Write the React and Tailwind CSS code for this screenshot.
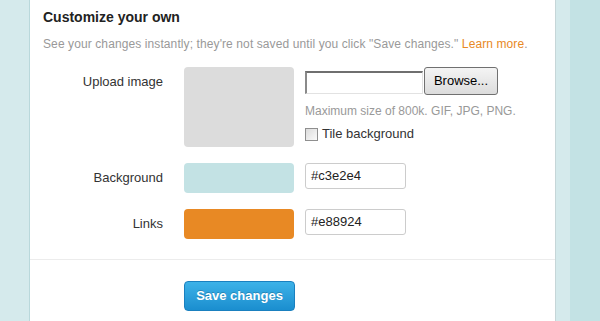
export default function App() {
  return (
    <div className="flex h-[321px] w-[600px] overflow-hidden bg-[#c3e2e4] font-['Liberation_Sans',Arial,sans-serif] text-[13px] text-[#333]">
      <div className="w-[29px] shrink-0 bg-[#d5eaec]" />
      <div className="w-px shrink-0 bg-[#b9d8db]" />
      <main className="w-[525px] shrink-0 bg-white">
        <div className="pl-[13px] pt-[8px]">
          <h2 className="text-[14px] font-bold leading-[18px] text-[#222]">Customize your own</h2>
          <p className="mt-[10px] text-[12px] leading-[16px] tracking-[0.1px] text-[#999]">
            See your changes instantly; they're not saved until you click "Save changes."{' '}
            <a className="text-[#e88924]">Learn more</a>.
          </p>
        </div>

        <div className="mt-[15px] flex">
          <label className="w-[134px] shrink-0 pr-[1px] pt-[7px] text-right leading-[16px]">Upload image</label>
          <div className="ml-[20px] h-[80px] w-[110px] shrink-0 rounded-[4px] bg-[#dcdcdc]" />
          <div className="ml-[11px] flex flex-col">
            <div className="flex items-start">
              <div className="mt-[4px] h-[23px] w-[118px] border-t-2 border-l-2 border-r border-b border-t-[#6f6f6f] border-l-[#8a8a8a] border-r-[#e2e2e2] border-b-[#e2e2e2] bg-white" />
              <button className="ml-px h-[28px] w-[74px] rounded-[3px] border border-[#707070] bg-gradient-to-b from-[#f4f4f4] to-[#dcdcdc] text-[13px] text-black">
                Browse...
              </button>
            </div>
            <p className="mt-[8px] text-[12px] leading-[16px] text-[#999]">Maximum size of 800k. GIF, JPG, PNG.</p>
            <label className="mt-[7px] flex items-center gap-[4px] leading-[16px]">
              <span className="h-[13px] w-[13px] border border-[#8f8f8f] bg-gradient-to-br from-[#dcdcdc] to-[#fafafa]" />
              Tile background
            </label>
          </div>
        </div>

        <div className="mt-[16px] flex items-center">
          <label className="w-[134px] shrink-0 pr-[1px] text-right leading-[16px]">Background</label>
          <div className="ml-[20px] h-[30px] w-[110px] shrink-0 rounded-[4px] bg-[#c3e2e4]" />
          <div className="ml-[11px] flex h-[26px] w-[101px] items-center self-start rounded-[3px] border border-[#ccc] pl-[5px] text-[#222]">
            #c3e2e4
          </div>
        </div>

        <div className="mt-[16px] flex items-center">
          <label className="w-[134px] shrink-0 pr-[1px] text-right leading-[16px]">Links</label>
          <div className="ml-[20px] h-[30px] w-[110px] shrink-0 rounded-[4px] bg-[#e88924]" />
          <div className="ml-[11px] flex h-[26px] w-[101px] items-center self-start rounded-[3px] border border-[#ccc] pl-[5px] text-[#222]">
            #e88924
          </div>
        </div>

        <div className="mt-[20px] h-px bg-[#ececec]" />

        <div className="mt-[21px] pl-[154px]">
          <button className="h-[30px] w-[111px] rounded-[4px] border border-[#1a80bf] bg-gradient-to-b from-[#3cb2e8] to-[#1a8ecf] text-[13px] font-bold text-white [text-shadow:0_-1px_0_rgba(0,0,0,0.2)]">
            Save changes
          </button>
        </div>
      </main>
      <div className="w-px shrink-0 bg-[#c6d6d8]" />
      <div className="w-[14px] shrink-0 bg-[#d5eaec]" />
      <div className="flex-1 bg-[#c3e2e4]" />
    </div>
  )
}
